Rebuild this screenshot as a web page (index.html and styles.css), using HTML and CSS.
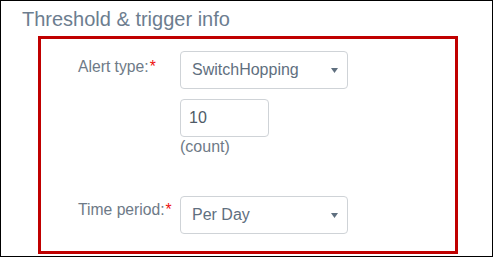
FILE: index.html
```html
<!DOCTYPE html>
<html lang="en">
<head>
<meta charset="utf-8">
<title>Threshold &amp; trigger info</title>
<link rel="stylesheet" href="styles.css">
</head>
<body>
<div class="page">
  <h2 class="title">Threshold &amp; trigger info</h2>
  <div class="panel">
    <div class="row">
      <div class="label label-first">Alert type:<span class="req">*</span></div>
      <div class="controls">
        <div class="select"><span class="select-text">SwitchHopping</span><svg class="caret" width="7" height="5" viewBox="0 0 7 5"><path d="M0 0H7L3.5 5Z" fill="#5f6f7f"/></svg></div>
        <div class="input">10</div>
        <div class="hint">(count)</div>
      </div>
    </div>
    <div class="row row-second">
      <div class="label label-second">Time period:<span class="req">*</span></div>
      <div class="controls">
        <div class="select"><span class="select-text">Per Day</span><svg class="caret" width="7" height="5" viewBox="0 0 7 5"><path d="M0 0H7L3.5 5Z" fill="#5f6f7f"/></svg></div>
      </div>
    </div>
  </div>
</div>
</body>
</html>
```
FILE: styles.css
```css
html, body {
  margin: 0;
  padding: 0;
  background: #fff;
}
.page {
  box-sizing: border-box;
  width: 493px;
  height: 257px;
  border: 1px solid #000;
  padding: 6px 0 0 21px;
  font-family: "Liberation Sans", Arial, sans-serif;
}
.title {
  margin: 0;
  font-size: 20px;
  line-height: 24px;
  font-weight: normal;
  color: #6c7d8f;
}
.panel {
  box-sizing: border-box;
  width: 420px;
  height: 218px;
  margin: 5px 0 0 16px;
  border: 3px solid #c00000;
  padding: 12px 0 0 37px;
}
.row {
  display: flex;
}
.row-second {
  margin-top: 39px;
}
.label {
  width: 102px;
  flex: none;
  font-size: 15.7px;
  line-height: 20px;
  color: #6e7a87;
}
.label-first {
  padding-top: 6px;
}
.label-second {
  padding-top: 4px;
}
.req {
  color: #ee1111;
  margin-left: 1px;
}
.controls {
  display: flex;
  flex-direction: column;
  align-items: flex-start;
}
.select {
  box-sizing: border-box;
  width: 168px;
  height: 38px;
  border: 1px solid #cfd3d7;
  border-radius: 4px;
  padding: 0 9px 0 11px;
  display: flex;
  align-items: center;
  justify-content: space-between;
  font-size: 16px;
  color: #5f6f80;
}
.caret {
  display: block;
  margin-top: 1px;
}
.input {
  box-sizing: border-box;
  width: 89px;
  height: 38px;
  margin-top: 10px;
  border: 1px solid #cfd3d7;
  border-radius: 4px;
  padding: 0 8px;
  display: flex;
  align-items: center;
  font-size: 16px;
  color: #4f5b67;
}
.hint {
  font-size: 16px;
  line-height: 20px;
  color: #6e7a87;
}
```
